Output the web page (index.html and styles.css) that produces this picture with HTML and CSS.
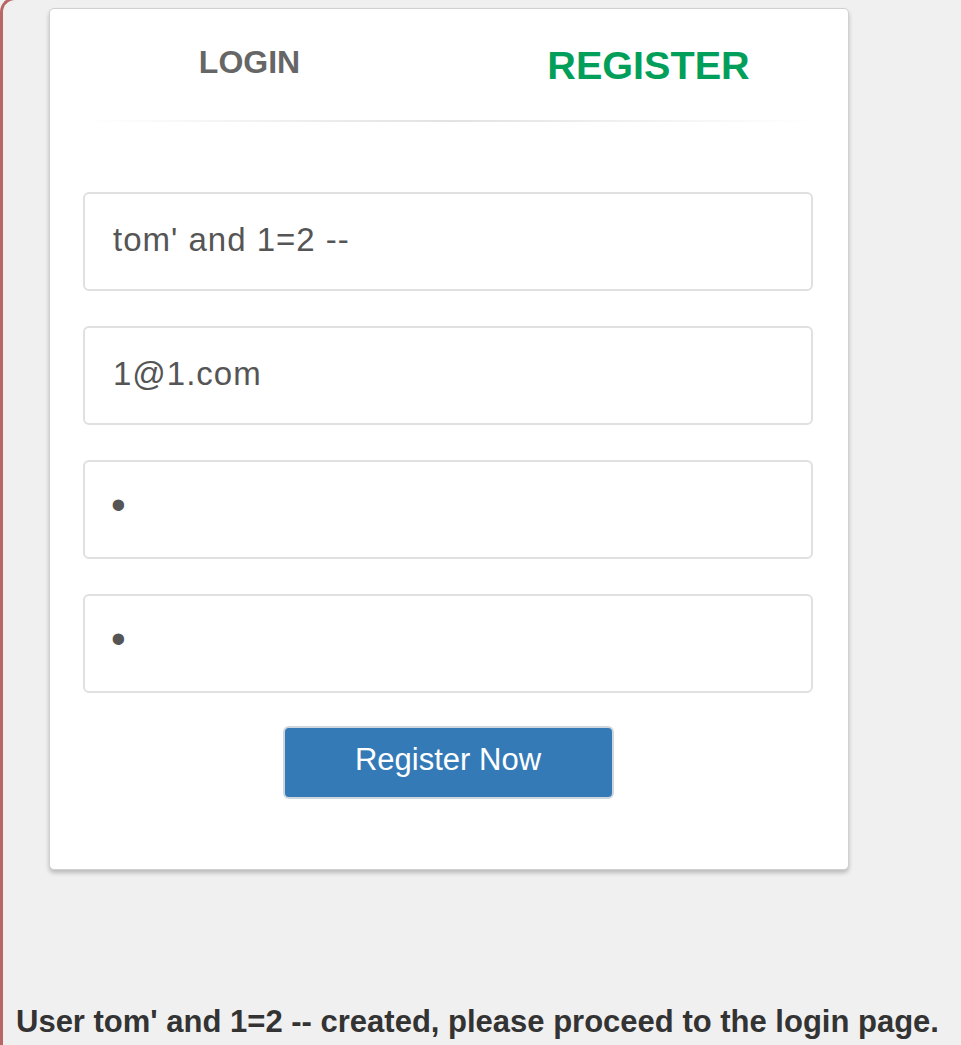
FILE: index.html
```html
<!DOCTYPE html>
<html>
<head>
<meta charset="utf-8">
<link rel="stylesheet" href="styles.css">
</head>
<body>
<div class="frame">
  <div class="panel">
    <div class="tabs">
      <a class="tab tab-login">LOGIN</a>
      <a class="tab tab-register">REGISTER</a>
    </div>
    <div class="divider"></div>
    <form class="form">
      <input class="field" type="text" value="tom' and 1=2 --">
      <input class="field" type="text" value="1@1.com">
      <input class="field field-pw" type="password" value="a">
      <input class="field field-pw" type="password" value="a">
      <button class="btn" type="button">Register Now</button>
    </form>
  </div>
  <p class="message">User tom' and 1=2 -- created, please proceed to the login page.</p>
</div>
</body>
</html>
```
FILE: styles.css
```css
html, body {
  margin: 0;
  padding: 0;
  background: #f0f0f0;
  font-family: "Liberation Sans", Arial, sans-serif;
  height: 100%;
  overflow: hidden;
}
.frame {
  margin-top: -3px;
  border-left: 3px solid #b86666;
  border-top: 3px solid #b86666;
  border-top-left-radius: 15px;
  padding: 8px 0 0 13px;
  min-height: 1100px;
  box-sizing: border-box;
}
.panel {
  width: 800px;
  height: 862px;
  margin-left: 33px;
  box-sizing: border-box;
  background: #fff;
  border: 1px solid #d0d0d0;
  border-radius: 5px;
  box-shadow: 0 3px 4px rgba(0, 0, 0, 0.22);
}
.tabs {
  display: flex;
  align-items: flex-start;
  padding-top: 35px;
  height: 76px;
}
.tab {
  flex: 1;
  text-align: center;
  font-weight: bold;
  text-decoration: none;
}
.tab-login {
  color: #666;
  font-size: 32px;
}
.tab-register {
  color: #029f5b;
  font-size: 39.6px;
  margin-top: -1px;
}
.divider {
  height: 2px;
  margin: 0 36px;
  background: linear-gradient(to right, rgba(230,230,230,0), #e2e2e2 50%, rgba(230,230,230,0));
}
.form {
  display: flex;
  flex-direction: column;
  align-items: flex-start;
  padding: 70px 34px 0 33px;
}
.field {
  width: 730px;
  height: 99px;
  box-sizing: border-box;
  border: 2px solid #e0e0e0;
  border-radius: 6px;
  padding: 0 27px 4px 28px;
  margin-bottom: 35px;
  font-family: "Liberation Sans", Arial, sans-serif;
  font-size: 33px;
  letter-spacing: 1px;
  color: #555;
  background: #fff;
  outline: none;
}
.field-pw {
  font-size: 42px;
  letter-spacing: 0;
  padding-left: 26px;
  padding-bottom: 10px;
}
.btn {
  align-self: center;
  width: 331px;
  height: 73px;
  background: #337ab7;
  color: #fff;
  border: 2px solid #cfd6dd;
  border-radius: 6px;
  font-family: "Liberation Sans", Arial, sans-serif;
  font-size: 31px;
  padding: 0 0 6px;
  margin: -2px 0 0 -1px;
}
.message {
  margin: 0;
  padding: 134px 0 0 0;
  font-size: 31px;
  font-weight: bold;
  color: #333;
}
```
